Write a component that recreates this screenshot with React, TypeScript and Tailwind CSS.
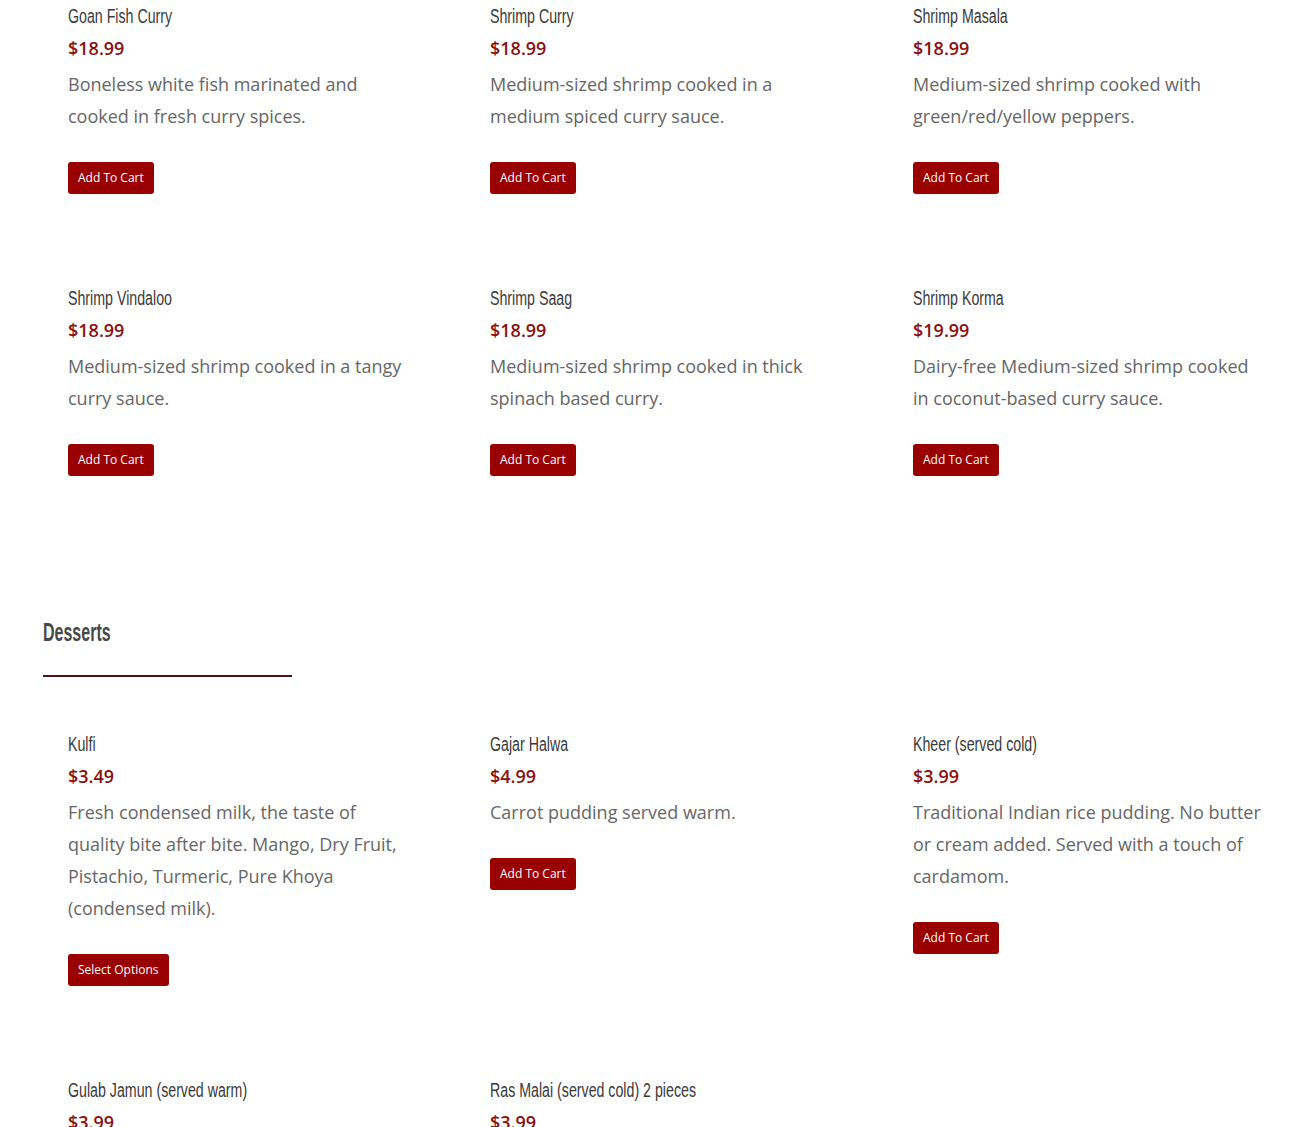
const titleFont = { fontFamily: '"Liberation Sans", Arial, sans-serif' };

type Item = {
  name: string;
  price: string;
  desc: string;
  button?: string;
};

const mains: Item[] = [
  { name: "Goan Fish Curry", price: "$18.99", desc: "Boneless white fish marinated and cooked in fresh curry spices." },
  { name: "Shrimp Curry", price: "$18.99", desc: "Medium-sized shrimp cooked in a medium spiced curry sauce." },
  { name: "Shrimp Masala", price: "$18.99", desc: "Medium-sized shrimp cooked with green/red/yellow peppers." },
  { name: "Shrimp Vindaloo", price: "$18.99", desc: "Medium-sized shrimp cooked in a tangy curry sauce." },
  { name: "Shrimp Saag", price: "$18.99", desc: "Medium-sized shrimp cooked in thick spinach based curry." },
  { name: "Shrimp Korma", price: "$19.99", desc: "Dairy-free Medium-sized shrimp cooked in coconut-based curry sauce." },
];

const desserts: Item[] = [
  {
    name: "Kulfi",
    price: "$3.49",
    desc: "Fresh condensed milk, the taste of quality bite after bite. Mango, Dry Fruit, Pistachio, Turmeric, Pure Khoya (condensed milk).",
    button: "Select Options",
  },
  { name: "Gajar Halwa", price: "$4.99", desc: "Carrot pudding served warm." },
  {
    name: "Kheer (served cold)",
    price: "$3.99",
    desc: "Traditional Indian rice pudding. No butter or cream added. Served with a touch of cardamom.",
  },
  { name: "Gulab Jamun (served warm)", price: "$3.99", desc: "Soft milk dumplings soaked in warm sugar syrup." },
  { name: "Ras Malai (served cold) 2 pieces", price: "$3.99", desc: "Soft cottage cheese patties in sweetened milk." },
];

function Product({ item }: { item: Item }) {
  return (
    <div className="pl-[25px]">
      <div className="w-[348.6px]">
        <h3 className="h-[32px] whitespace-nowrap text-[20px] leading-[32px] text-[#3a3a3a]" style={titleFont}>
          <span className="inline-block origin-left scale-x-[0.71]">{item.name}</span>
        </h3>
        <p className="text-[18px] leading-[32px] font-semibold text-[#8b1010]">{item.price}</p>
        <p className="mt-[4px] text-[18px] leading-[32px] text-[#666]">{item.desc}</p>
        <button className="mt-[30px] h-[32px] rounded-[3px] bg-[#990000] px-[10px] text-[12px] text-white">
          {item.button ?? "Add To Cart"}
        </button>
      </div>
    </div>
  );
}

function Grid({ items }: { items: Item[] }) {
  return (
    <div className="grid grid-cols-[422px_423px_422px] gap-y-[88px]">
      {items.map((item) => (
        <Product key={item.name} item={item} />
      ))}
    </div>
  );
}

export default function App() {
  return (
    <div className="min-h-screen overflow-hidden bg-white px-[43px]" style={{ fontFamily: '"Open Sans", sans-serif' }}>
      <Grid items={mains} />
      <div className="mt-[136px]">
        <h2 className="h-[40px] whitespace-nowrap text-[25px] leading-[40px] font-bold text-[#484848]" style={titleFont}>
          <span className="inline-block origin-left scale-x-[0.64]">Desserts</span>
        </h2>
        <div className="mt-[23px] h-[2px] w-[249px] bg-[#4a1517]" />
      </div>
      <div className="mt-[51px]">
        <Grid items={desserts} />
      </div>
    </div>
  );
}
